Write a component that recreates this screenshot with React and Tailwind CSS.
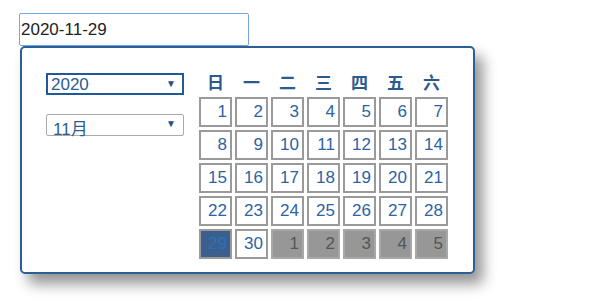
import React from "react";

const days = ["日", "一", "二", "三", "四", "五", "六"];

function Cell({ n, kind }) {
  if (kind === "sel") {
    return (
      <div className="h-[30px] border-2 border-[#9a9a9a] bg-[#3a5f8e] text-[#2f6fb8] text-right pr-[3px] leading-[26px] text-[17px]">
        {n}
      </div>
    );
  }
  if (kind === "out") {
    return (
      <div className="h-[30px] border-2 border-[#a8a8a8] bg-[#979797] text-[#555555] text-right pr-[3px] leading-[26px] text-[17px]">
        {n}
      </div>
    );
  }
  return (
    <div className="h-[30px] border-2 border-[#9a9a9a] bg-white text-[#2c63a4] text-right pr-[3px] leading-[26px] text-[17px]">
      {n}
    </div>
  );
}

export default function App() {
  const cells = [];
  for (let i = 1; i <= 28; i++) cells.push({ n: i, kind: "in" });
  cells.push({ n: 29, kind: "sel" });
  cells.push({ n: 30, kind: "in" });
  for (let i = 1; i <= 5; i++) cells.push({ n: i, kind: "out" });

  return (
    <div className="w-[589px] h-[300px] bg-white overflow-hidden pt-[13px] pl-[19px]" style={{ fontFamily: '"Liberation Sans", "Noto Sans CJK SC", Arial, sans-serif' }}>
      <div className="w-[230px] h-[33px] border-[1.5px] border-[#76a6ea] rounded-[2px] flex items-center pl-[1px] text-[17px] text-[#222222]">
        2020-11-29
      </div>
      <div className="ml-[1px] w-[455px] h-[228px] border-2 border-[#2d5f97] rounded-[5px] bg-white shadow-[8px_10px_14px_rgba(0,0,0,0.42)] flex pt-[24px] pl-[24px]">
        <div className="w-[138px] flex flex-col">
          <div className="mt-[1px] h-[22px] border-2 border-[#1f5a96] flex items-center justify-between pl-[3px] pr-[6px] text-[17px] text-[#2b5c94]">
            <span className="leading-none">2020</span>
            <span className="text-[10px] text-[#1f4f85] leading-none">▼</span>
          </div>
          <div className="mt-[19px] h-[22px] border border-[#aaaaaa] rounded-[2px] flex justify-between pl-[6px] pr-[7px] text-[17px] text-[#2b5c94]">
            <span className="leading-none mt-[6px]">11月</span>
            <span className="text-[10px] text-[#1f4f85] leading-none mt-[4px]">▼</span>
          </div>
        </div>
        <div className="ml-[15px]">
          <div className="grid grid-cols-[repeat(7,33px)] gap-x-[3px] h-[23px] mb-[2px]">
            {days.map((d) => (
              <div key={d} className="text-center text-[17px] font-bold text-[#2b5a8e] leading-[23px]">
                {d}
              </div>
            ))}
          </div>
          <div className="grid grid-cols-[repeat(7,33px)] gap-[3px]">
            {cells.map((c, i) => (
              <Cell key={i} n={c.n} kind={c.kind} />
            ))}
          </div>
        </div>
      </div>
    </div>
  );
}
